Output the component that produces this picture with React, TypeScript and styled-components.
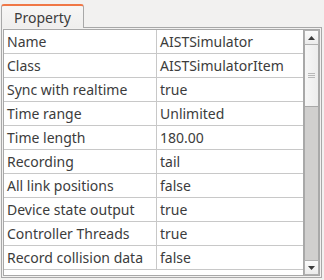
import React from "react";
import styled, { createGlobalStyle } from "styled-components";

const Global = createGlobalStyle`
  html, body { margin: 0; padding: 0; background: #f2f1f0; }
  body { font-family: "Noto Sans", "DejaVu Sans", sans-serif; font-size: 14px; color: #3c3c3c; }
`;

const Page = styled.div`
  width: 324px;
  height: 280px;
  background: #f2f1f0;
  padding: 4px 2px 2px 1px;
  box-sizing: border-box;
  display: flex;
  flex-direction: column;
`;

const TabBar = styled.div`
  display: flex;
  height: 24px;
  position: relative;
  z-index: 1;
`;

const Tab = styled.div`
  width: 83px;
  box-sizing: border-box;
  border: 1px solid #a8a8a8;
  border-top: 2px solid #f07746;
  border-bottom: none;
  border-radius: 3px 3px 0 0;
  background: linear-gradient(#f7f6f5, #efeeed);
  display: flex;
  align-items: center;
  justify-content: center;
  padding-top: 1px;
  color: #3c3c3c;
`;

const Frame = styled.div`
  flex: 1;
  border: 1px solid #a8a8a8;
  background: #f2f1f0;
  padding: 1px;
  display: flex;
  margin-top: -1px;
`;

const View = styled.div`
  flex: 1;
  display: flex;
  border: 1px solid #a8a8a8;
  background: #ffffff;
`;

const Table = styled.div`
  flex: 1;
  display: grid;
  grid-template-columns: 153px 1fr;
  grid-auto-rows: 24px;
  align-content: start;
  overflow: hidden;
`;

const Cell = styled.div<{ $first?: boolean }>`
  border-bottom: 1px solid #c8c8c8;
  border-right: ${(p) => (p.$first ? "1px solid #c8c8c8" : "none")};
  padding-left: 3px;
  display: flex;
  align-items: center;
  white-space: nowrap;
  overflow: hidden;
  color: #3c3c3c;
`;

const ScrollBar = styled.div`
  width: 15px;
  display: flex;
  flex-direction: column;
  border-left: 1px solid #a8a8a8;
  background: #f2f1f0;
`;

const ArrowButton = styled.div`
  height: 15px;
  box-sizing: border-box;
  border: 1px solid #b0b0b0;
  background: linear-gradient(#fbfbfb, #ececec);
  display: flex;
  align-items: center;
  justify-content: center;
`;

const Track = styled.div`
  flex: 1;
  display: flex;
  flex-direction: column;
  background: #d0cfce;
  border-left: 1px solid #a8a8a8;
  border-right: 1px solid #a8a8a8;
`;

const Thumb = styled.div`
  height: 62px;
  box-sizing: border-box;
  background: linear-gradient(90deg, #f6f6f6, #ececec);
  border-bottom: 1px solid #a8a8a8;
  display: flex;
  align-items: center;
  justify-content: center;
`;

const Grip = styled.div`
  width: 7px;
  height: 5px;
  border-top: 1px solid #b8b8b8;
  border-bottom: 1px solid #b8b8b8;
  box-sizing: border-box;
  position: relative;
  &::after {
    content: "";
    position: absolute;
    left: 0;
    right: 0;
    top: 1px;
    border-top: 1px solid #b8b8b8;
  }
`;

const rows: [string, string][] = [
  ["Name", "AISTSimulator"],
  ["Class", "AISTSimulatorItem"],
  ["Sync with realtime", "true"],
  ["Time range", "Unlimited"],
  ["Time length", "180.00"],
  ["Recording", "tail"],
  ["All link positions", "false"],
  ["Device state output", "true"],
  ["Controller Threads", "true"],
  ["Record collision data", "false"],
];

const Arrow = ({ up }: { up?: boolean }) => (
  <svg width="7" height="4" viewBox="0 0 7 4">
    <path d={up ? "M0 4 L3.5 0 L7 4 Z" : "M0 0 L3.5 4 L7 0 Z"} fill="#3c3c3c" />
  </svg>
);

export default function App() {
  return (
    <>
      <Global />
      <Page>
        <TabBar>
          <Tab>Property</Tab>
        </TabBar>
        <Frame>
          <View>
            <Table>
              {rows.map(([k, v]) => (
                <React.Fragment key={k}>
                  <Cell $first>{k}</Cell>
                  <Cell>{v}</Cell>
                </React.Fragment>
              ))}
            </Table>
            <ScrollBar>
              <ArrowButton>
                <Arrow up />
              </ArrowButton>
              <Track>
                <Thumb>
                  <Grip />
                </Thumb>
              </Track>
              <ArrowButton>
                <Arrow />
              </ArrowButton>
            </ScrollBar>
          </View>
        </Frame>
      </Page>
    </>
  );
}
